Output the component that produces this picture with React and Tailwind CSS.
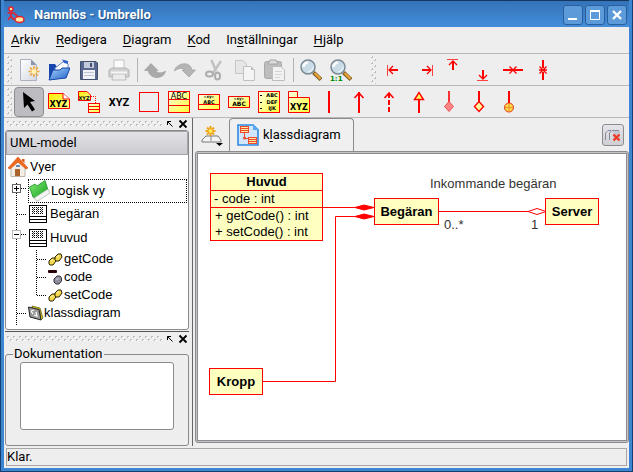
import React from "react";

const RED = "#ff0000";

function Icon({ children, size = "22" }) {
  return (
    <svg className="block shrink-0" width={size} height={size} viewBox={"0 0 " + size + " " + size} aria-hidden="true">
      {children}
    </svg>
  );
}

function ToolButton({ label, active, disabled, children }) {
  return (
    <button
      type="button"
      aria-label={label}
      title={label}
      disabled={disabled}
      className={
        "flex size-[30px] shrink-0 items-center justify-center rounded-sm border " +
        (active ? "border-[#8c8c90] bg-[#bdbdc1]" : "border-transparent")
      }
    >
      <Icon>{children}</Icon>
    </button>
  );
}

function VerticalGrip() {
  return (
    <svg className="mx-px block h-7 w-[6px] shrink-0" aria-hidden="true">
      <defs>
        <pattern id="gripV" width="6" height="6" patternUnits="userSpaceOnUse">
          <rect x="0" y="0" width="2" height="2" fill="#fff" />
          <rect x="0" y="1" width="2" height="1" fill="#bdbdbd" />
          <rect x="1" y="0" width="1" height="1" fill="#bdbdbd" />
          <rect x="3" y="3" width="2" height="2" fill="#fff" />
          <rect x="3" y="4" width="2" height="1" fill="#bdbdbd" />
          <rect x="4" y="3" width="1" height="1" fill="#bdbdbd" />
        </pattern>
      </defs>
      <rect width="100%" height="100%" fill="url(#gripV)" />
    </svg>
  );
}

function DockHeader({ name }) {
  return (
    <div className="flex h-3 items-center gap-1 pr-px pl-0.5">
      <svg className="block h-[6px] min-w-0 flex-1" aria-hidden="true">
        <defs>
          <pattern id="gripH" width="6" height="6" patternUnits="userSpaceOnUse">
            <rect x="0" y="0" width="2" height="1" fill="#bdbdbd" />
            <rect x="0" y="1" width="1" height="1" fill="#bdbdbd" />
            <rect x="1" y="1" width="2" height="1" fill="#fff" />
            <rect x="3" y="3" width="2" height="1" fill="#bdbdbd" />
            <rect x="3" y="4" width="1" height="1" fill="#bdbdbd" />
            <rect x="4" y="4" width="2" height="1" fill="#fff" />
          </pattern>
        </defs>
        <rect width="100%" height="100%" fill="url(#gripH)" />
      </svg>
      <button type="button" aria-label={"Lossa " + name} className="block">
        <Icon size="8">
          <path d="M1.500 5V1.500H5M1.500 1.500L6.500 6.500" fill="none" stroke="#000" />
        </Icon>
      </button>
      <button type="button" aria-label={"Stäng " + name} className="block">
        <Icon size="10">
          <path d="M1.500 1.500L8.500 8.500M8.500 1.500L1.500 8.500" fill="none" stroke="#000" strokeWidth="1.800" />
        </Icon>
      </button>
    </div>
  );
}

function WindowButton({ label, children }) {
  return (
    <button
      type="button"
      aria-label={label}
      className="flex size-5 items-center justify-center rounded-[3px] border border-[#2a5f9e] bg-[#5c9ad9]"
    >
      <Icon size="12">{children}</Icon>
    </button>
  );
}

function TitleBar() {
  return (
    <header className="flex h-[27px] shrink-0 items-center border-t border-[#16365f] bg-linear-to-b from-[#3473b8] to-[#438edb] pt-px pr-0.5 pl-[3px]">
      <svg className="block shrink-0" width="18" height="18" viewBox="0 0 18 18" aria-hidden="true">
        <g fill="none" stroke="#e8202a" strokeWidth="1.500">
          <circle cx="4" cy="3" r="2" fill="#ffe9a8" />
          <path d="M4 5V10M0.500 7H8M4 10L1 14M4 10L7 14M7 7L11 11" />
          <ellipse cx="12.500" cy="13.500" rx="4.500" ry="3" fill="#ffe9a8" />
        </g>
      </svg>
      <h1 className="flex-1 truncate pl-[9px] text-[13px] leading-4 font-bold text-white [text-shadow:1px_1px_1px_#1d4a80]">
        Namnlös - Umbrello
      </h1>
      <div className="flex gap-0.5">
        <WindowButton label="Minimera">
          <path d="M1 10H10" stroke="#fff" strokeWidth="2" />
        </WindowButton>
        <WindowButton label="Maximera">
          <path d="M1.500 2.500H10.500V10.500H1.500Z" fill="none" stroke="#fff" />
          <path d="M1 2H11" stroke="#fff" strokeWidth="2" />
        </WindowButton>
        <WindowButton label="Stäng">
          <path d="M2 2L10 10M10 2L2 10" stroke="#fff" strokeWidth="2.400" />
        </WindowButton>
      </div>
    </header>
  );
}

const MENUS = [
  ["", "A", "rkiv"],
  ["", "R", "edigera"],
  ["", "D", "iagram"],
  ["", "K", "od"],
  ["In", "s", "tällningar"],
  ["", "H", "jälp"],
];

function MenuBar() {
  return (
    <nav className="flex h-[27px] shrink-0 items-center gap-4 border-b border-[#b9b9b9] px-[7px]">
      {MENUS.map(([before, key, after]) => (
        <button key={key} type="button" className="leading-4">
          {before}
          <u className="underline-offset-2">{key}</u>
          {after}
        </button>
      ))}
    </nav>
  );
}

function Divider() {
  return (
    <div className="flex h-6 w-[6px] shrink-0 justify-center">
      <div className="w-px bg-[#b4b4b4]" />
    </div>
  );
}

function MagnifierShape() {
  return (
    <g>
      <path d="M13.500 13.500L21 20.500" stroke="#7a5a20" strokeWidth="4" />
      <path d="M14.500 14L20.500 19.800" stroke="#e8a33c" strokeWidth="2.400" />
      <circle cx="8" cy="8" r="7" fill="#c9dbe6" stroke="#7c8a94" strokeWidth="1.500" />
      <path d="M3.500 8A4.500 4.500 0 0 1 8 3.500" fill="none" stroke="#fff" strokeWidth="2.500" />
      <path d="M8 13a5 5 0 0 0 5-5" fill="none" stroke="#e6f2f8" strokeWidth="1.500" />
    </g>
  );
}

function Gradients() {
  return (
    <svg className="absolute size-0" aria-hidden="true">
      <defs>
        <linearGradient id="yellow" x1="0" y1="0" x2="1" y2="1">
          <stop offset="0" stopColor="#ffffe0" />
          <stop offset="1" stopColor="#ffff38" />
        </linearGradient>
        <linearGradient id="gold" x1="0" y1="0" x2="1" y2="1">
          <stop offset="0" stopColor="#ffee00" />
          <stop offset="1" stopColor="#ffff90" />
        </linearGradient>
        <linearGradient id="blue" x1="0" y1="0" x2="1" y2="1">
          <stop offset="0" stopColor="#a9d2fb" />
          <stop offset="1" stopColor="#1c5fc8" />
        </linearGradient>
        <linearGradient id="paper" x1="0" y1="0" x2="1" y2="1">
          <stop offset="0" stopColor="#ffffff" />
          <stop offset="1" stopColor="#d3d7e2" />
        </linearGradient>
        <linearGradient id="green" x1="0" y1="0" x2="1" y2="1">
          <stop offset="0" stopColor="#8bea7a" />
          <stop offset="1" stopColor="#0ba01a" />
        </linearGradient>
      </defs>
    </svg>
  );
}

function MainToolbar() {
  return (
    <div role="toolbar" aria-label="Huvudverktyg" className="flex h-8 shrink-0 items-center overflow-hidden border-b border-[#b9b9b9] pl-0.5">
      <VerticalGrip />
      <ToolButton label="Ny">
        <path d="M2.500 0.500H13L18.500 6V21.500H2.500Z" fill="url(#paper)" stroke="#aab0bf" />
        <path d="M13 0.500V6H18.500Z" fill="#8a93aa" />
        <path d="M16 7V18M10.500 12.500H21.500M12 8.500L20 16.500M20 8.500L12 16.500" stroke="#f0a73a" strokeWidth="1.600" />
        <circle cx="16" cy="12.500" r="2.500" fill="#fff3b8" />
      </ToolButton>
      <ToolButton label="Öppna">
        <path d="M1 21V5H7L9 8H20V12" fill="#1747ae" />
        <path d="M7 9L17 1.500L20 5V13H7Z" fill="#fff" stroke="#6485c6" />
        <path d="M14 0.500L20 2V5L16 4Z" fill="#2f62c8" />
        <path d="M1 21L5 11H12L14 9H22L18 19Z" fill="url(#blue)" stroke="#1445a8" />
      </ToolButton>
      <ToolButton label="Spara">
        <path d="M2.500 2.500H18L19.500 4V20.500H2.500Z" fill="#586890" stroke="#42506f" />
        <rect x="6" y="3" width="10" height="6" fill="#c3cbdb" />
        <rect x="12" y="4" width="2" height="4" fill="#44506f" />
        <rect x="5" y="11" width="12" height="9" fill="#f1f3f8" />
        <path d="M6 13.500H16M6 16.500H16" stroke="#bcc4d6" />
      </ToolButton>
      <ToolButton label="Skriv ut" disabled>
        <path d="M6 1H16V10H6Z" fill="#fbfbfb" stroke="#c4c4c4" />
        <path d="M1 11L4 9H18L21 11V18H1Z" fill="#d0d0d0" stroke="#b4b4b4" />
        <path d="M5 15H17L18 21H4Z" fill="#ececec" stroke="#bdbdbd" />
        <path d="M3 13.500H19" stroke="#f6f6f6" strokeWidth="2" />
      </ToolButton>
      <Divider />
      <ToolButton label="Ångra" disabled>
        <path d="M7 4.500L0.500 11.500H4C5 16 9 19 14 18.500C18 18 21 15.500 21.500 12C18.500 14.500 13 14.500 11.500 11.500H14Z" fill="#a9a9a9" stroke="#999" strokeWidth="0.600" />
      </ToolButton>
      <ToolButton label="Gör om" disabled>
        <path d="M15 18L21.500 11H18C17 6 13 4 8 5C4 6 1 8.500 0.500 12C4 9 9 8.500 11 11H8Z" fill="#b4b4b4" stroke="#9c9c9c" strokeWidth="0.600" />
      </ToolButton>
      <ToolButton label="Klipp ut" disabled>
        <path d="M7.500 1L12 12M17 2L9 14" stroke="#c2c2c2" strokeWidth="2.500" />
        <ellipse cx="5.500" cy="15" rx="3.500" ry="2.500" fill="none" stroke="#adadad" strokeWidth="2" />
        <ellipse cx="13.500" cy="17" rx="2.500" ry="3.500" fill="none" stroke="#adadad" strokeWidth="2" />
      </ToolButton>
      <ToolButton label="Kopiera" disabled>
        <path d="M1.500 1.500H9L12.500 5V14.500H1.500Z" fill="#e6e6e6" stroke="#c6c6c6" />
        <path d="M9.500 7.500H17L20.500 11V21.500H9.500Z" fill="#f4f4f4" stroke="#c0c0c0" />
        <path d="M17 7.500V11H20.500Z" fill="#c0c0c0" />
      </ToolButton>
      <ToolButton label="Klistra in" disabled>
        <rect x="0.500" y="2.500" width="17" height="17" rx="2" fill="#bdbdbd" stroke="#a8a8a8" />
        <path d="M4 5L6 1H12L14 5Z" fill="#ddd" stroke="#a4a4a4" />
        <path d="M8.500 7.500H17L20.500 11V21.500H8.500Z" fill="#f2f2f2" stroke="#bcbcbc" />
        <path d="M11 12.500H18M11 15.500H18M11 18.500H16" stroke="#d4d4d4" />
      </ToolButton>
      <Divider />
      <ToolButton label="Zooma">
        <MagnifierShape />
      </ToolButton>
      <ToolButton label="Zooma till 100 %">
        <MagnifierShape />
        <text x="0" y="21.500" fontSize="7" fontWeight="700" fill="#008a00" fontFamily="DejaVu Sans, sans-serif">1:1</text>
      </ToolButton>
      <div className="flex items-center pl-[14px]">
        <VerticalGrip />
        <ToolButton label="Justera vänster">
          <path d="M5.500 6V17" stroke="#ff4040" />
          <path d="M7 11H16" stroke={RED} strokeWidth="2" />
          <path d="M11 7L7 11L11 15" fill="none" stroke={RED} strokeWidth="1.300" />
        </ToolButton>
        <ToolButton label="Justera höger">
          <path d="M20.500 6V17" stroke="#ff4040" />
          <path d="M10 11H19" stroke={RED} strokeWidth="2" />
          <path d="M15 7L19 11L15 15" fill="none" stroke={RED} strokeWidth="1.300" />
        </ToolButton>
        <ToolButton label="Justera överkant">
          <path d="M5 0.500H16" stroke="#ff4040" />
          <path d="M11 2V11" stroke={RED} strokeWidth="2" />
          <path d="M7 6L11 2L15 6" fill="none" stroke={RED} strokeWidth="1.300" />
        </ToolButton>
        <ToolButton label="Justera underkant">
          <path d="M5 21.500H16" stroke="#ff4040" />
          <path d="M11 11V20" stroke={RED} strokeWidth="2" />
          <path d="M7 16L11 20L15 16" fill="none" stroke={RED} strokeWidth="1.300" />
        </ToolButton>
        <ToolButton label="Justera vertikal mitt">
          <path d="M1 11H9M13 11H21" stroke={RED} strokeWidth="2" />
          <path d="M7.500 7.500L11 11L7.500 14.500M14.500 7.500L11 11L14.500 14.500M9 11H13" fill="none" stroke={RED} strokeWidth="1.300" />
        </ToolButton>
        <ToolButton label="Justera horisontell mitt">
          <path d="M11 1V9M11 13V21" stroke={RED} strokeWidth="2" />
          <path d="M7.500 7.500L11 11L14.500 7.500M7.500 14.500L11 11L14.500 14.500M7 11H15" fill="none" stroke={RED} strokeWidth="1.300" />
        </ToolButton>
      </div>
    </div>
  );
}

function Tag({ x, y, size, children, weight = "700" }) {
  return (
    <text x={x} y={y} fontSize={size} fontWeight={weight} fontFamily="DejaVu Sans, sans-serif" textAnchor="middle" fill="#000">
      {children}
    </text>
  );
}

function DiagramToolbar() {
  return (
    <div role="toolbar" aria-label="Arbetsverktyg" className="flex h-8 shrink-0 items-center overflow-hidden border-b border-[#b9b9b9] pl-0.5">
      <VerticalGrip />
      <ToolButton label="Markera" active>
        <path d="M5 1L17 10L12 11L17 18.500L14 20.500L9.500 13.500L6 17Z" fill="#000" />
      </ToolButton>
      <ToolButton label="Anteckning">
        <path d="M0.500 2.500H15L21.500 8V17.500H0.500Z" fill="url(#gold)" stroke={RED} />
        <path d="M15 2.500V8H21.500" fill="#fff" stroke={RED} />
        <Tag x="10.500" y="16" size="8">XYZ</Tag>
      </ToolButton>
      <ToolButton label="Ankare">
        <path d="M0.500 0.500H9L12.500 4V9.500H0.500Z" fill="url(#gold)" stroke={RED} />
        <Tag x="6" y="8.500" size="5">XYZ</Tag>
        <path d="M13 5.500H17.500V12" fill="none" stroke={RED} strokeDasharray="1 1" />
        <rect x="10.500" y="12.500" width="11" height="9" fill="url(#yellow)" stroke={RED} />
        <path d="M10 15.500H22M10 18.500H22" stroke={RED} />
      </ToolButton>
      <ToolButton label="Textrad">
        <text x="11" y="15" fontSize="11" fontWeight="700" fontFamily="Roboto, sans-serif" textAnchor="middle">
          XYZ
        </text>
      </ToolButton>
      <ToolButton label="Ruta">
        <rect x="1.500" y="1.500" width="19" height="19" fill="none" stroke={RED} />
      </ToolButton>
      <ToolButton label="Klass">
        <rect x="0.500" y="0.500" width="21" height="21" fill="url(#yellow)" stroke={RED} />
        <path d="M0 8.500H22M0 14.500H22" stroke={RED} />
        <Tag x="11" y="7.500" size="8" weight="400">ABC</Tag>
      </ToolButton>
      <ToolButton label="Gränssnitt">
        <rect x="0.500" y="3.500" width="21" height="15" fill="url(#yellow)" stroke={RED} />
        <path d="M0 13.500H22" stroke={RED} />
        <Tag x="11" y="7" size="4">«xy»</Tag>
        <Tag x="11" y="12.500" size="5">ABC</Tag>
      </ToolButton>
      <ToolButton label="Datatyp">
        <rect x="0.500" y="5.500" width="21" height="11" fill="url(#yellow)" stroke={RED} />
        <Tag x="11" y="9" size="4">«xy»</Tag>
        <Tag x="11" y="15" size="6">ABC</Tag>
      </ToolButton>
      <ToolButton label="Uppräkning">
        <rect x="0.500" y="0.500" width="21" height="21" fill="url(#yellow)" stroke={RED} />
        <path d="M2 4.500H4M2 11.500H4M2 17.500H4" stroke="#000" />
        <Tag x="14" y="6" size="5">ABC</Tag>
        <Tag x="14" y="13" size="5">DEF</Tag>
        <Tag x="14" y="19" size="5">IJK</Tag>
      </ToolButton>
      <ToolButton label="Paket">
        <path d="M0.500 21.500V0.500H9.500V6.500H21.500V21.500Z" fill="url(#yellow)" stroke={RED} />
        <path d="M0 6.500H10" stroke={RED} />
        <Tag x="11" y="19" size="8">XYZ</Tag>
      </ToolButton>
      <ToolButton label="Association">
        <path d="M11 0V22" stroke={RED} strokeWidth="2" />
      </ToolButton>
      <ToolButton label="Riktad association">
        <path d="M11 1V22" stroke={RED} strokeWidth="2" />
        <path d="M6.500 7L11 2L15.500 7" fill="none" stroke={RED} strokeWidth="1.600" />
      </ToolButton>
      <ToolButton label="Beroende">
        <path d="M11 2V22" stroke={RED} strokeWidth="2" strokeDasharray="5 2" />
        <path d="M6.500 7L11 2L15.500 7" fill="none" stroke={RED} strokeWidth="1.600" />
      </ToolButton>
      <ToolButton label="Generalisering">
        <path d="M11 8V22" stroke={RED} strokeWidth="2" />
        <path d="M6.500 8.500L11 1.500L15.500 8.500Z" fill="#ffff60" stroke={RED} strokeWidth="1.400" />
      </ToolButton>
      <ToolButton label="Komposition">
        <path d="M11 0V11" stroke="#ff3030" strokeWidth="2" />
        <path d="M6.500 15.500L11 10.500L15.500 15.500L11 20.500Z" fill="#ff8484" stroke="#e85050" />
      </ToolButton>
      <ToolButton label="Aggregering">
        <path d="M11 0V11" stroke={RED} strokeWidth="2" />
        <path d="M6.500 15.500L11 10.500L15.500 15.500L11 20.500Z" fill="#ffffa0" stroke={RED} strokeWidth="1.400" />
      </ToolButton>
      <ToolButton label="Inneslutning">
        <path d="M11 0V12" stroke={RED} strokeWidth="2" />
        <circle cx="11" cy="16.500" r="4.500" fill="#ffd84a" stroke="#e03010" />
        <path d="M7 16.500H15M11 12V21" stroke="#f09030" />
      </ToolButton>
    </div>
  );
}

/* Dotted guide lines of the tree; "box" draws the expander on the line. */
function Guide({ h, box, from = 0, to, branch = true }) {
  const end = to === undefined ? h : to;
  const mid = Math.floor(h / 2) - (box ? 3 : 0);
  return (
    <svg className="block shrink-0" width="20" height={h} viewBox={"0 0 20 " + h} aria-hidden="true">
      <path d={"M8.500 " + from + "V" + end} stroke="#000" strokeDasharray="1 1" />
      {branch && <path d={"M9 " + (mid + 0.5) + "H18"} stroke="#000" strokeDasharray="1 1" />}
      {box && (
        <g>
          <rect x="4.500" y={mid - 3.5} width="8" height="8" fill="#fff" stroke={box === "plus" ? "#666" : "#b8b8b8"} />
          <path d={"M6 " + (mid + 0.5) + "H11"} stroke="#000" />
          {box === "plus" && <path d={"M8.500 " + (mid - 2) + "V" + (mid + 3)} stroke="#000" />}
        </g>
      )}
    </svg>
  );
}

function ClassIcon() {
  return (
    <Icon size="20">
      <rect x="1.500" y="1.500" width="17" height="17" fill="#fff" stroke="#000" />
      <path d="M1 12.500H19M1 15.500H19" stroke="#000" />
      <path d="M4 3.500H16M4 5.500H16M4 7.500H16M4 9.500H16" stroke="#000" strokeDasharray="1 1" />
      <path d="M5 4.500H16M5 6.500H16M5 8.500H16" stroke="#555" strokeDasharray="1 3" />
    </Icon>
  );
}

function MethodIcon() {
  return (
    <Icon size="16">
      <path d="M1 10L4 7H7L8 10L5 14H2L1 13Z" fill="#f5d94a" stroke="#2a2200" />
      <path d="M7 6L10 3H13L14 6L11 10H8L7 9Z" fill="#f5d94a" stroke="#2a2200" />
      <path d="M3 10L5 8.500M9 6L11 4.500" stroke="#fffbd0" />
    </Icon>
  );
}

function AttributeIcon() {
  return (
    <Icon size="16">
      <rect x="0" y="1" width="9" height="3" rx="1" fill="#2a0008" />
      <path d="M6 10L9 7H12L13.500 9V12L11 15H8L6 13Z" fill="#8f8f9c" stroke="#33333d" />
      <path d="M8 10.500L11 9.500" stroke="#c8c8d2" />
    </Icon>
  );
}

const HEL = "font-['Liberation_Sans',Arial,sans-serif]";

function MemberRow({ name, icon, last }) {
  return (
    <li className="flex h-[18px] items-center">
      <Guide h={18} branch={false} />
      <Guide h={18} to={last ? 9 : 18} />
      {icon}
      <span>{name}</span>
    </li>
  );
}

function ModelTree() {
  return (
    <section className="flex min-h-0 flex-1 flex-col overflow-hidden rounded-[3px] border border-[#8b8b8f] bg-white">
      <button
        type="button"
        className="h-6 shrink-0 border border-[#a3a3a7] bg-linear-to-b from-[#e2e2e6] to-[#cbcbd0] pl-[3px] text-left leading-4"
      >
        UML-model
      </button>
      <ul className="pr-px pl-0.5">
        <li className="flex h-6 items-center gap-0.5">
          <Icon size="20">
            <path d="M3 9V19.500H17V9L10 3Z" fill="#f2eee6" stroke="#bdb6a8" />
            <rect x="7" y="12" width="5" height="7" fill="#a8642c" />
            <rect x="8" y="8" width="4" height="2" fill="#6a88b8" />
            <path d="M0 11L10 0L20 11L18 12L10 5L2 12Z" fill="#f26a1e" stroke="#cf4a0c" strokeWidth="0.600" />
            <path d="M14 2H16.500V6L14 3.500Z" fill="#d8571a" />
          </Icon>
          Vyer
        </li>
        <li className="flex h-6 items-center">
          <Guide h={24} box="plus" from={4} />
          <span className="flex h-6 flex-1 items-center border border-dotted border-black">
            <Icon size="22">
              <path d="M0.500 7L6 4L8 6L16 0.500L19 10L8 19L4 17Z" fill="url(#green)" stroke="#14911c" strokeWidth="0.800" />
              <path d="M5 18L19 9L21 13L8 21.500Z" fill="#f4f4f4" stroke="#9aa89a" strokeWidth="0.600" />
            </Icon>
            Logisk vy
          </span>
        </li>
        <li className={"flex h-[22px] items-center " + HEL}>
          <Guide h={22} />
          <ClassIcon />
          <span className="pl-0.5">Begäran</span>
        </li>
        <li className={HEL}>
          <div className="flex h-[25px] items-center">
            <Guide h={25} box="minus" />
            <ClassIcon />
            <span className="pl-0.5">Huvud</span>
          </div>
          <ul>
            <MemberRow name="getCode" icon={<MethodIcon />} />
            <MemberRow name="code" icon={<AttributeIcon />} />
            <MemberRow name="setCode" icon={<MethodIcon />} last />
          </ul>
        </li>
        <li className={"flex h-[18px] items-center " + HEL}>
          <Guide h={18} />
          <Icon size="16">
            <path d="M4 1L12 3L15 13L13 15L12 5L4 3Z" fill="#d6ce2a" stroke="#5a5600" strokeWidth="0.700" />
            <path d="M0.500 2L11 4.500L13 15L2 12Z" fill="#9a9a9a" stroke="#222" />
            <path d="M3 6L6 5M3 6L5 9M8 7L9 11L6 10" fill="none" stroke="#fff" strokeWidth="1.200" />
          </Icon>
          klassdiagram
        </li>
        <li className="h-1" aria-hidden="true">
          <Guide h={4} branch={false} />
        </li>
      </ul>
    </section>
  );
}

function LeftDock() {
  return (
    <aside className="flex w-[186px] shrink-0 flex-col px-px">
      <DockHeader name="UML-model" />
      <ModelTree />
      <div className="my-px h-px shrink-0 bg-[#555]" />
      <DockHeader name="Dokumentation" />
      <fieldset className="mt-px h-[100px] shrink-0 rounded-[3px] border border-[#8b8b8f] px-[14px]">
        <legend className="-ml-[7px] px-px leading-4">
          <label htmlFor="doc">Dokumentation</label>
        </legend>
        <textarea id="doc" className="block h-[68px] w-full resize-none rounded-[3px] border border-[#8b8b8f] bg-white p-1 outline-none" />
      </fieldset>
    </aside>
  );
}

function ViewTabs() {
  return (
    <div className="flex h-[33px] shrink-0 items-end">
      <button type="button" aria-label="Nytt diagram" className="flex h-8 w-[34px] shrink-0 items-center justify-center">
        <Icon size="22">
          <path d="M1 16L5 12H17L20 16V18H1Z" fill="#f4f4f4" stroke="#777" />
          <path d="M10 12V17" stroke="#888" />
          <path d="M9.500 2V12M4.500 7H14.500M6 3.500L13 10.500M13 3.500L6 10.500" stroke="#eea51e" strokeWidth="2" />
          <circle cx="9.500" cy="7" r="2" fill="#ffe95a" />
          <path d="M15 19H22L18.500 22Z" fill="#000" />
        </Icon>
      </button>
      <button
        type="button"
        role="tab"
        aria-selected="true"
        className="flex h-[33px] w-[125px] shrink-0 items-center gap-1 rounded-t-[4px] border border-b-0 border-[#8b8b8f] bg-[#f0f0f0] pl-[7px]"
      >
        <Icon size="22">
          <path d="M1 1H16L21 6V21H1Z" fill="#cfe6fb" stroke="#2f8ae0" strokeWidth="1.600" />
          <path d="M16 0V6H22Z" fill="#5aa8ee" />
          <rect x="3.500" y="2.500" width="8" height="6" fill="#ffe9a0" stroke="#f0482c" />
          <path d="M3 4.500H12M3 6.500H12" stroke="#f0482c" />
          <path d="M7.500 9V14.500H11" fill="none" stroke="#f0482c" />
          <circle cx="7.500" cy="14" r="1.500" fill="#f0482c" />
          <rect x="11.500" y="13.500" width="8" height="6" fill="#ffe9a0" stroke="#f0482c" />
          <path d="M11 15.500H20M11 17.500H20" stroke="#f0482c" />
        </Icon>
        <span className="leading-4">
          k<u className="underline-offset-2">l</u>assdiagram
        </span>
      </button>
      <div className="flex h-full flex-1 items-center justify-end pr-[5px]">
        <button
          type="button"
          aria-label="Stäng diagram"
          className="flex size-[22px] items-center justify-center rounded-[3px] border border-[#8b8b8f] bg-linear-to-b from-[#e6e6ea] to-[#cfcfd4]"
        >
          <Icon size="18">
            <path d="M1.500 14V7L4 4.500H7M5.500 14V7L8 4.500H15" fill="none" stroke="#858a98" />
            <path d="M9 5H16V14H9Z" fill="#c4c8d2" />
            <path d="M9.500 8.500L15.500 14.500M15.500 8.500L9.500 14.500" stroke="#f03a24" strokeWidth="2.400" />
          </Icon>
        </button>
      </div>
    </div>
  );
}

const NODE = "absolute flex items-center justify-center border border-[#ff0000] bg-[#ffffc0] font-bold";

function DiagramCanvas() {
  return (
    <div className={"relative min-h-0 flex-1 overflow-hidden bg-white text-[13px] leading-4 " + HEL}>
      <svg className="absolute inset-0 size-full" aria-hidden="true">
        <g fill="none" stroke={RED}>
          <path d="M124 53.500H160M65 227.500H137.500V62.500H160M240 57.500H331" />
          <path d="M157 53.500L166 51L176 53.500L166 56ZM157 62.500L166 60L176 62.500L166 65Z" fill={RED} />
          <path d="M330 57.500L339 54.500L348 57.500L339 60.500Z" fill="#fff" />
        </g>
      </svg>
      <div className="absolute top-[19px] left-3 w-[113px] border border-[#ff0000] bg-[#ffffc0]">
        <div className="h-4 text-center font-bold">Huvud</div>
        <div className="h-[17px] border-t border-[#ff0000] pl-[3px]">- code : int</div>
        <div className="border-t border-[#ff0000] pl-1">
          <div className="h-4">+ getCode() : int</div>
          <div className="h-4">+ setCode() : int</div>
        </div>
      </div>
      <div className={NODE + " top-11 left-44 h-[27px] w-[65px]"}>Begäran</div>
      <div className={NODE + " top-11 left-[347px] h-[27px] w-[54px]"}>Server</div>
      <div className={NODE + " top-[214px] left-[11px] h-[27px] w-[54px]"}>Kropp</div>
      <span className="absolute top-[22px] left-[232px] whitespace-nowrap text-[#333]">Inkommande begäran</span>
      <span className="absolute top-[63px] left-[246px] text-[#333]">0..*</span>
      <span className="absolute top-[63px] left-[333px] text-[#333]">1</span>
    </div>
  );
}

export default function App() {
  return (
    <div className="flex h-screen flex-col bg-[#143f70] pb-px pl-px pr-px font-[Roboto,'Noto_Sans',sans-serif] text-[13px] text-black">
      <Gradients />
      <div className="flex min-h-0 flex-1 flex-col border-x-[3px] border-b-[3px] border-[#3d86d2] bg-[#eeeeee]">
        <TitleBar />
        <MenuBar />
        <MainToolbar />
        <DiagramToolbar />
        <main className="flex min-h-0 flex-1">
          <LeftDock />
          <div className="mx-[2px] w-px shrink-0 bg-[#666]" />
          <section className="flex min-w-0 flex-1 flex-col pb-[3px]">
            <ViewTabs />
            <div className="flex min-h-0 flex-1 flex-col rounded-[3px] border border-[#8b8b8f] bg-[#c4c4c6] p-px">
              <div className="flex min-h-0 flex-1 flex-col border border-[#8b8b8f]">
                <DiagramCanvas />
              </div>
            </div>
          </section>
        </main>
        <footer className="shrink-0 px-[2px] pt-[2px] pb-[2px]">
          <div className="h-[18px] border border-[#a8a8a8] leading-4">Klar.</div>
        </footer>
      </div>
    </div>
  );
}
